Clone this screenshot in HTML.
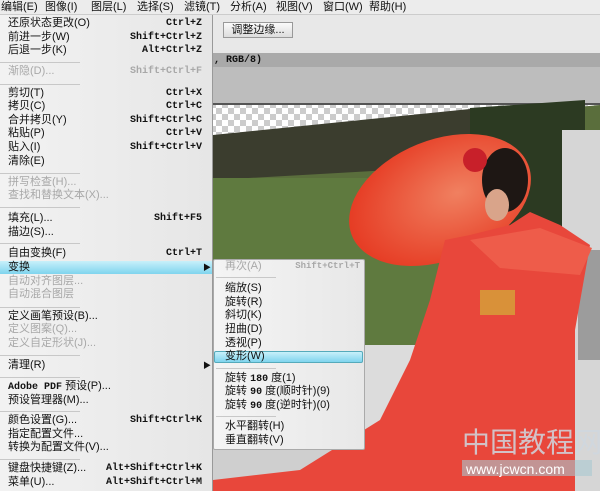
<!DOCTYPE html>
<html><head><meta charset="utf-8"><style>
*{margin:0;padding:0;box-sizing:border-box}
body{width:600px;height:491px;overflow:hidden;position:relative;background:#e8e8e8;font-family:"Liberation Sans","Noto Sans CJK SC",sans-serif;font-size:11px;color:#111}
.a{position:absolute;white-space:nowrap;line-height:13px}
.m{font-family:"Liberation Mono","Noto Sans CJK SC",monospace;font-size:10px;font-weight:bold}
.g{color:#a8a8a8}
.sep{position:absolute;height:1px;background:#c8c8c8}
</style></head><body>
<svg style="position:absolute;left:0;top:0" width="600" height="491">
<rect x="213" y="50" width="387" height="441" fill="#e6e6e6"/>
<rect x="213" y="53" width="387" height="14" fill="#a9a9a9"/>
<rect x="213" y="67" width="387" height="37" fill="#bdbdbd"/>
<rect x="213" y="103" width="387" height="2" fill="#555"/>
<defs><pattern id="ck" width="12" height="12" patternUnits="userSpaceOnUse"><rect width="12" height="12" fill="#fff"/><rect width="6" height="6" fill="#ccc"/><rect x="6" y="6" width="6" height="6" fill="#ccc"/></pattern>
<radialGradient id="um" cx="0.6" cy="0.5" r="0.6"><stop offset="0" stop-color="#f08060"/><stop offset="1" stop-color="#e63c24"/></radialGradient></defs>
<rect x="213" y="105" width="387" height="30" fill="url(#ck)"/>
<polygon points="213,140 600,105 600,491 213,491" fill="#5a6e3c"/>
<polygon points="213,135 480,108 480,165 213,180" fill="#3b3d2e"/>
<rect x="213" y="178" width="230" height="170" fill="#5f7a3f"/>
<polygon points="470,108 585,100 585,230 470,230" fill="#2c3a22"/>
<rect x="562" y="130" width="38" height="361" fill="#d6d6d6"/>
<rect x="578" y="250" width="22" height="110" fill="#9c9c9c"/>
<rect x="213" y="345" width="220" height="146" fill="#dcdcdc"/>
<rect x="213" y="440" width="160" height="51" fill="#cfcfcf"/>
<ellipse cx="440" cy="200" rx="95" ry="60" transform="rotate(-22 440 200)" fill="url(#um)"/>
<path d="M445 240 L430 300 L410 360 L380 420 L300 470 L213 480 L213 491 L575 491 L575 330 L590 245 L560 225 L530 212 L510 225 L470 235 Z" fill="#e8473b"/>
<path d="M470 240 L540 228 L592 248 L580 275 L500 268 Z" fill="#ee5c4a"/>
<ellipse cx="505" cy="180" rx="23" ry="32" fill="#1e1714"/>
<ellipse cx="497" cy="205" rx="12" ry="16" fill="#d9a48a"/>
<circle cx="475" cy="160" r="12" fill="#c8202a"/>
<rect x="480" y="290" width="35" height="25" fill="#d4a43a" opacity=".8"/>
<text x="462" y="452" font-size="28" fill="#cfd8e0" opacity=".85" font-family="Noto Sans CJK SC">中国教程网</text>
<rect x="462" y="460" width="130" height="16" fill="#a8c8d0" opacity=".6"/>
<text x="466" y="474" font-size="14" fill="#fff" font-family="Liberation Sans">www.jcwcn.com</text>
</svg>
<div style="position:absolute;left:0;top:0;width:600px;height:15px;background:#ececec;border-bottom:1px solid #ccc"></div>
<div class="a" style="left:1px;top:1px">编辑(E)</div>
<div class="a" style="left:45px;top:1px">图像(I)</div>
<div class="a" style="left:91px;top:1px">图层(L)</div>
<div class="a" style="left:137px;top:1px">选择(S)</div>
<div class="a" style="left:184px;top:1px">滤镜(T)</div>
<div class="a" style="left:230px;top:1px">分析(A)</div>
<div class="a" style="left:276px;top:1px">视图(V)</div>
<div class="a" style="left:323px;top:1px">窗口(W)</div>
<div class="a" style="left:369px;top:1px">帮助(H)</div>
<div class="a" style="left:223px;top:22px;width:70px;height:16px;border:1px solid #999;background:linear-gradient(#fafafa,#ddd);text-align:center;line-height:14px">调整边缘...</div>
<div class="a m" style="left:214px;top:54px">, RGB/8)</div>
<div style="position:absolute;left:0;top:15px;width:213px;height:476px;background:linear-gradient(90deg,#f2f2f2,#e6e6e6);border-right:1px solid #999"></div>
<div class="a" style="left:8px;top:17px">还原状态更改(O)</div><div class="a m" style="right:398px;top:17px">Ctrl+Z</div>
<div class="a" style="left:8px;top:31px">前进一步(W)</div><div class="a m" style="right:398px;top:31px">Shift+Ctrl+Z</div>
<div class="a" style="left:8px;top:44px">后退一步(K)</div><div class="a m" style="right:398px;top:44px">Alt+Ctrl+Z</div>
<div class="sep" style="left:0;top:62px;width:80px"></div>
<div class="a g" style="left:8px;top:65px">渐隐(D)...</div><div class="a m g" style="right:398px;top:65px">Shift+Ctrl+F</div>
<div class="sep" style="left:0;top:84px;width:80px"></div>
<div class="a" style="left:8px;top:87px">剪切(T)</div><div class="a m" style="right:398px;top:87px">Ctrl+X</div>
<div class="a" style="left:8px;top:100px">拷贝(C)</div><div class="a m" style="right:398px;top:100px">Ctrl+C</div>
<div class="a" style="left:8px;top:114px">合并拷贝(Y)</div><div class="a m" style="right:398px;top:114px">Shift+Ctrl+C</div>
<div class="a" style="left:8px;top:127px">粘贴(P)</div><div class="a m" style="right:398px;top:127px">Ctrl+V</div>
<div class="a" style="left:8px;top:141px">贴入(I)</div><div class="a m" style="right:398px;top:141px">Shift+Ctrl+V</div>
<div class="a" style="left:8px;top:155px">清除(E)</div>
<div class="sep" style="left:0;top:173px;width:80px"></div>
<div class="a g" style="left:8px;top:176px">拼写检查(H)...</div>
<div class="a g" style="left:8px;top:189px">查找和替换文本(X)...</div>
<div class="sep" style="left:0;top:207px;width:80px"></div>
<div class="a" style="left:8px;top:212px">填充(L)...</div><div class="a m" style="right:398px;top:212px">Shift+F5</div>
<div class="a" style="left:8px;top:226px">描边(S)...</div>
<div class="sep" style="left:0;top:243px;width:80px"></div>
<div class="a" style="left:8px;top:247px">自由变换(F)</div><div class="a m" style="right:398px;top:247px">Ctrl+T</div>
<div style="position:absolute;left:0;top:261px;width:212px;height:13px;background:linear-gradient(#c8f0fa,#7fd4ee)"></div>
<div class="a" style="left:8px;top:261px">变换</div><div class="a" style="left:203px;top:261px;font-size:8px">▶</div>
<div class="a g" style="left:8px;top:275px">自动对齐图层...</div>
<div class="a g" style="left:8px;top:288px">自动混合图层</div>
<div class="sep" style="left:0;top:307px;width:80px"></div>
<div class="a" style="left:8px;top:310px">定义画笔预设(B)...</div>
<div class="a g" style="left:8px;top:323px">定义图案(Q)...</div>
<div class="a g" style="left:8px;top:337px">定义自定形状(J)...</div>
<div class="sep" style="left:0;top:355px;width:80px"></div>
<div class="a" style="left:8px;top:359px">清理(R)</div><div class="a" style="left:203px;top:359px;font-size:8px">▶</div>
<div class="sep" style="left:0;top:377px;width:80px"></div>
<div class="a" style="left:8px;top:380px"><span class="m">Adobe PDF</span> 预设(P)...</div>
<div class="a" style="left:8px;top:394px">预设管理器(M)...</div>
<div class="sep" style="left:0;top:411px;width:80px"></div>
<div class="a" style="left:8px;top:414px">颜色设置(G)...</div><div class="a m" style="right:398px;top:414px">Shift+Ctrl+K</div>
<div class="a" style="left:8px;top:428px">指定配置文件...</div>
<div class="a" style="left:8px;top:441px">转换为配置文件(V)...</div>
<div class="sep" style="left:0;top:459px;width:80px"></div>
<div class="a" style="left:8px;top:462px">键盘快捷键(Z)...</div><div class="a m" style="right:398px;top:462px">Alt+Shift+Ctrl+K</div>
<div class="a" style="left:8px;top:476px">菜单(U)...</div><div class="a m" style="right:398px;top:476px">Alt+Shift+Ctrl+M</div>
<div style="position:absolute;left:213px;top:259px;width:152px;height:191px;background:linear-gradient(90deg,#f4f4f4,#e8e8e8);border:1px solid #aaa;border-radius:2px"></div>
<div class="a g" style="left:225px;top:260px">再次(A)</div><div class="a m g" style="right:240px;top:260px;font-size:9px">Shift+Ctrl+T</div>
<div class="sep" style="left:216px;top:277px;width:60px"></div>
<div class="a" style="left:225px;top:282px">缩放(S)</div>
<div class="a" style="left:225px;top:296px">旋转(R)</div>
<div class="a" style="left:225px;top:309px">斜切(K)</div>
<div class="a" style="left:225px;top:323px">扭曲(D)</div>
<div class="a" style="left:225px;top:337px">透视(P)</div>
<div style="position:absolute;left:214px;top:351px;width:149px;height:12px;background:linear-gradient(#c8f0fa,#7fd4ee);border:1px solid #5ab;border-radius:2px"></div>
<div class="a" style="left:225px;top:350px">变形(W)</div>
<div class="sep" style="left:216px;top:368px;width:60px"></div>
<div class="a" style="left:225px;top:372px">旋转 <span class="m">180</span> 度(1)</div>
<div class="a" style="left:225px;top:385px">旋转 <span class="m">90</span> 度(顺时针)(9)</div>
<div class="a" style="left:225px;top:399px">旋转 <span class="m">90</span> 度(逆时针)(0)</div>
<div class="sep" style="left:216px;top:416px;width:60px"></div>
<div class="a" style="left:225px;top:420px">水平翻转(H)</div>
<div class="a" style="left:225px;top:434px">垂直翻转(V)</div>
</body></html>
